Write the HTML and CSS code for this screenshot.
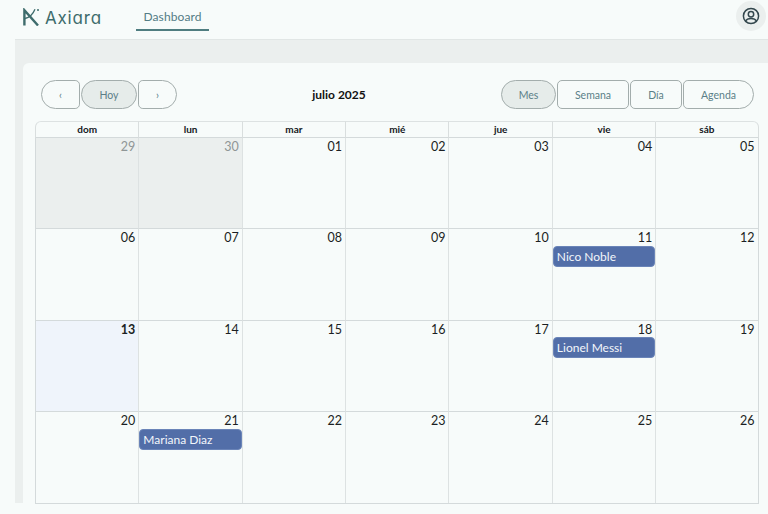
FILE: index.html
```html
<!DOCTYPE html>
<html lang="es">
<head>
<meta charset="utf-8">
<title>Axiara</title>
<link rel="stylesheet" href="styles.css">
</head>
<body>
<header class="topbar">
  <div class="brand">
    <svg class="logo" width="18" height="18" viewBox="0 0 18 18" fill="none" stroke="#3e6c6c" stroke-width="2.4">
      <path d="M1.4 17.5V2.2L15 17.5"/>
      <path d="M2 10.5C6.500 9.500 10 6 12 1.200" stroke-width="1.3"/>
      <circle cx="15" cy="2" r="1" fill="#3e6c6c" stroke="none"/>
    </svg>
    <span class="brand-name">Axiara</span>
  </div>
  <nav class="nav"><a class="nav-item">Dashboard</a></nav>
  <div class="avatar">
    <svg width="18" height="18" viewBox="0 0 18 18" fill="none" stroke="#33474d" stroke-width="1.5">
      <circle cx="9" cy="9" r="7.6"/>
      <circle cx="9" cy="7.2" r="2.7"/>
      <path d="M3.6 14c1-2 3-2.6 5.4-2.6s4.4.6 5.4 2.6"/>
    </svg>
  </div>
</header>
<main class="main">
  <section class="card">
    <div class="toolbar">
      <div class="btn-group">
        <button class="btn btn-start">‹</button>
        <button class="btn btn-pill active wide-hoy">Hoy</button>
        <button class="btn btn-end">›</button>
      </div>
      <h1 class="title">julio 2025</h1>
      <div class="btn-group">
        <button class="btn btn-pill active w-mes">Mes</button>
        <button class="btn w-semana">Semana</button>
        <button class="btn w-dia">Día</button>
        <button class="btn btn-end w-agenda">Agenda</button>
      </div>
    </div>
    <div class="calendar">
      <div class="dow">dom</div><div class="dow">lun</div><div class="dow">mar</div><div class="dow">mié</div><div class="dow">jue</div><div class="dow">vie</div><div class="dow">sáb</div>

      <div class="day off"><span class="num">29</span></div>
      <div class="day off"><span class="num">30</span></div>
      <div class="day"><span class="num">01</span></div>
      <div class="day"><span class="num">02</span></div>
      <div class="day"><span class="num">03</span></div>
      <div class="day"><span class="num">04</span></div>
      <div class="day"><span class="num">05</span></div>

      <div class="day"><span class="num">06</span></div>
      <div class="day"><span class="num">07</span></div>
      <div class="day"><span class="num">08</span></div>
      <div class="day"><span class="num">09</span></div>
      <div class="day"><span class="num">10</span></div>
      <div class="day"><span class="num">11</span><div class="event">Nico Noble</div></div>
      <div class="day"><span class="num">12</span></div>

      <div class="day today"><span class="num">13</span></div>
      <div class="day"><span class="num">14</span></div>
      <div class="day"><span class="num">15</span></div>
      <div class="day"><span class="num">16</span></div>
      <div class="day"><span class="num">17</span></div>
      <div class="day"><span class="num">18</span><div class="event">Lionel Messi</div></div>
      <div class="day"><span class="num">19</span></div>

      <div class="day"><span class="num">20</span></div>
      <div class="day"><span class="num">21</span><div class="event">Mariana Diaz</div></div>
      <div class="day"><span class="num">22</span></div>
      <div class="day"><span class="num">23</span></div>
      <div class="day"><span class="num">24</span></div>
      <div class="day"><span class="num">25</span></div>
      <div class="day"><span class="num">26</span></div>
    </div>
  </section>
</main>
</body>
</html>
```
FILE: styles.css
```css
* { box-sizing: border-box; }
html, body { margin: 0; padding: 0; height: 100%; overflow: hidden; }
body { background: #f7fbfa; font-family: Lato, "Open Sans", sans-serif; color: #1b1f23; }

.topbar { height: 40px; display: flex; align-items: stretch; padding-left: 23px; }
.brand { display: flex; align-items: flex-start; width: 113px; padding-top: 8px; }
.logo { display: block; }
.brand-name { font-family: Inter, Lato, sans-serif; font-feature-settings: "cv11" 1; font-weight: 400; font-size: 17px; letter-spacing: 0.8px; color: #3e6c6c; margin-left: 4px; line-height: 20px; }
.nav { display: flex; }
.nav-item { width: 73px; height: 31px; border-bottom: 2px solid #4f7d80; font-size: 12px; letter-spacing: 0.1px; line-height: 33px; text-align: center; color: #537c85; }
.avatar { margin-left: auto; margin-right: 2px; margin-top: 1px; width: 30px; height: 30px; border-radius: 50%; background: #ebefee; display: flex; align-items: center; justify-content: center; }

.main { margin-left: 15px; height: 464px; background: #ebefee; border-top: 1px solid #e1e6e5; margin-top: -1px; padding: 23px 0 0 8px; }
.card { background: #f7fbfa; height: 440px; border-radius: 6px 0 0 0; padding: 17px 9px 0 12px; }
.toolbar { display: flex; align-items: center; justify-content: space-between; height: 29px; padding: 0 5px 0 6px; margin-bottom: 12px; }
.title { margin: 0; font-size: 12px; font-weight: 700; color: #111; }
.btn-group { display: flex; gap: 1px; }
.btn { height: 29px; width: 39px; padding: 0; background: transparent; border: 1px solid #a3adac; border-radius: 5px; font-family: Lato, sans-serif; font-size: 10.5px; color: #5b7f88; }
.btn-start { border-radius: 15px 5px 5px 15px; }
.btn-end { border-radius: 5px 15px 15px 5px; }
.btn-pill { border-radius: 15px; }
.active { background: #e6ecea; }
.wide-hoy { width: 56px; }
.w-mes { width: 55px; }
.w-semana { width: 72px; }
.w-dia { width: 52px; }
.w-agenda { width: 71px; }

.calendar { display: grid; grid-template-columns: repeat(7, 1fr); grid-template-rows: 16.5px 91.5px 91.5px 91.5px 90.5px; width: 723.6px; border-bottom: 1px solid #d4dadb; }
.dow { font-size: 10px; font-weight: 700; line-height: 15px; text-align: center; color: #14181c; border-top: 1px solid #dde2e2; border-left: 1px solid #d9dede; border-bottom: 1px solid #d4dadb; }
.dow:first-child { border-top-left-radius: 6px; }
.dow:nth-child(7) { border-top-right-radius: 6px; border-right: 1px solid #d9dede; }
.day { border-left: 1px solid #dde2e2; border-bottom: 1px solid #d4dadb; text-align: right; min-width: 0; }
.day:nth-child(7n+1) { border-left-color: #d4dadb; }
.day:nth-child(7n) { border-right: 1px solid #d4dadb; }
.day:nth-last-child(-n+7) { border-bottom: 0; }
.num { display: block; font-size: 12.5px; line-height: 15.5px; padding: 1px 3px 0 0; color: #1b1f23; }
.off { background: #ebefee; }
.off .num { color: #8f9696; }
.today { background: #eff4fb; }
.today .num { font-weight: 700; }
.event { height: 21px; padding: 0 3px; border-radius: 4px; background: #526ea8; border: 1px solid #6a84b8; color: #f2f6fb; font-size: 12px; line-height: 19px; text-align: left; }
```
